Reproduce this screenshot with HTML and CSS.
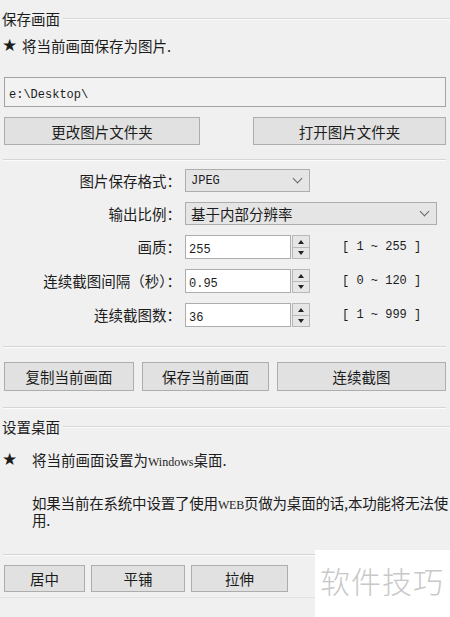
FILE: index.html
```html
<!DOCTYPE html>
<html lang="zh-CN">
<head>
  <meta charset="UTF-8">
  <title>保存画面</title>
  <link rel="stylesheet" href="styles.css">
</head>
<body>

  <div class="group-title first">保存画面</div>
  <div class="star-row"><span class="star">★</span><span class="star-text">将当前画面保存为图片.</span></div>

  <div class="path-box"><span class="asc">e:\Desktop\</span></div>

  <div class="btn-row two">
    <button class="btn wide">更改图片文件夹</button>
    <button class="btn wide">打开图片文件夹</button>
  </div>

  <div class="sep sep-a"></div>

  <div class="form">
    <label>图片保存格式：</label>
    <div class="select small"><span class="asc">JPEG</span><span class="chev"></span></div>

    <label>输出比例：</label>
    <div class="select large"><span>基于内部分辨率</span><span class="chev"></span></div>

    <label>画质：</label>
    <div class="spin-row">
      <div class="spin-input"><span class="asc">255</span></div>
      <div class="spin-btns"><span class="up"></span><span class="down"></span></div>
      <span class="range asc">[ 1 ~ 255 ]</span>
    </div>

    <label>连续截图间隔（秒）：</label>
    <div class="spin-row">
      <div class="spin-input"><span class="asc">0.95</span></div>
      <div class="spin-btns"><span class="up"></span><span class="down"></span></div>
      <span class="range asc">[ 0 ~ 120 ]</span>
    </div>

    <label>连续截图数：</label>
    <div class="spin-row">
      <div class="spin-input"><span class="asc">36</span></div>
      <div class="spin-btns"><span class="up"></span><span class="down"></span></div>
      <span class="range asc">[ 1 ~ 999 ]</span>
    </div>
  </div>

  <div class="sep sep-b"></div>

  <div class="btn-row three">
    <button class="btn b1">复制当前画面</button>
    <button class="btn b2">保存当前画面</button>
    <button class="btn b3">连续截图</button>
  </div>

  <div class="sep sep-c"></div>

  <div class="group-title second">设置桌面</div>
  <div class="star-row second"><span class="star">★</span><span class="star-text indent">将当前画面设置为<span class="latin">Windows</span>桌面.</span></div>

  <p class="note">如果当前在系统中设置了使用<span class="latin">WEB</span>页做为桌面的话,本功能将无法使用.</p>

  <div class="sep sep-d"></div>

  <div class="btn-row bottom">
    <button class="btn c1">居中</button>
    <button class="btn c2">平铺</button>
    <button class="btn c3">拉伸</button>
  </div>

  <div class="foot-line"></div>

  <div class="watermark">软件技巧</div>

</body>
</html>
```

FILE: styles.css
```css
body {
  margin: 0;
  width: 450px;
  height: 617px;
  overflow: hidden;
  position: relative;
  background: #f0f0f0;
  color: #1c1c1c;
  font-family: "Noto Sans CJK SC", sans-serif;
  font-size: 14.5px;
}

.asc {
  font-family: "Liberation Mono", monospace;
  font-size: 12px;
}

.latin {
  font-family: "Liberation Serif", serif;
  font-size: 12px;
  line-height: 1;
}

/* group box titles */
.group-title {
  display: flex;
  align-items: center;
  height: 22px;
  line-height: 22px;
  padding-left: 2px;
}

.group-title::after {
  content: "";
  flex: 1;
  border-top: 1px solid #d9d9d9;
  border-bottom: 1px solid #fbfbfb;
  margin-left: 3px;
}

.group-title.first {
  margin-top: 8px;
}

.group-title.second {
  margin-top: 7px;
}

.star-row {
  display: flex;
  align-items: center;
  height: 18px;
  margin-top: 6px;
  padding-left: 2px;
}

.star-row.second {
  margin-top: 12px;
}

.star {
  font-family: "DejaVu Sans", sans-serif;
  font-size: 17px;
  line-height: 18px;
  width: 20px;
}

.star-text.indent {
  margin-left: 10px;
}

.path-box {
  margin: 23px 4px 0;
  height: 28px;
  line-height: 28px;
  border: 1px solid #a3a3a3;
  padding-left: 4px;
  background: #f2f2f2;
}

/* buttons */
.btn {
  font-family: "Noto Sans CJK SC", sans-serif;
  font-size: 14.5px;
  color: #1c1c1c;
  background: #e1e1e1;
  border: 1px solid #adadad;
  padding: 0;
  margin: 0;
}

.btn-row {
  display: flex;
  padding: 0 4px;
}

.btn-row.two {
  margin-top: 10px;
  height: 28px;
  justify-content: space-between;
}

.btn.wide {
  width: 196px;
}

.btn-row.two .btn:last-child {
  width: 193px;
}

.btn-row.three {
  margin-top: 14px;
  height: 29px;
  gap: 8px;
}

.b1 { width: 130px; }
.b2 { width: 127px; }
.b3 { width: 169px; }

.btn-row.bottom {
  margin-top: 9px;
  height: 27px;
  gap: 6px;
}

.c1 { width: 81px; }
.c2 { width: 94px; }
.c3 { width: 97px; }

/* separators */
.sep {
  margin: 0 4px 0 3px;
  border-top: 1px solid #d5d5d5;
  border-bottom: 1px solid #fbfbfb;
}

.sep-a { margin-top: 14px; }
.sep-b { margin-top: 19px; }
.sep-c { margin-top: 16px; }
.sep-d { margin-top: 26px; }

.foot-line {
  margin-top: 5px;
  border-top: 1px solid #e2e2e2;
}

/* settings form */
.form {
  display: grid;
  grid-template-columns: 181px 1fr;
  grid-template-rows: 23px 23px 24px 24px 24px;
  column-gap: 4px;
  row-gap: 10px;
  margin-top: 8px;
}

.form label {
  text-align: right;
  line-height: 23px;
  white-space: nowrap;
}

.select {
  display: flex;
  align-items: center;
  justify-content: space-between;
  box-sizing: border-box;
  height: 23px;
  padding: 0 6px 0 5px;
  background: #e5e5e5;
  border: 1px solid #adadad;
}

.select.small { width: 125px; }
.select.large { width: 252px; }

.chev {
  width: 6px;
  height: 6px;
  border-right: 1.3px solid #666;
  border-bottom: 1.3px solid #666;
  transform: translateY(-2px) rotate(45deg);
  margin-right: 2px;
}

.spin-row {
  display: flex;
  align-items: center;
}

.spin-input {
  box-sizing: border-box;
  width: 106px;
  height: 24px;
  line-height: 22px;
  padding-left: 3px;
  background: #fff;
  border: 1px solid #adadad;
}

.spin-btns {
  display: flex;
  flex-direction: column;
  width: 18px;
  height: 24px;
  margin-left: 1px;
}

.spin-btns span {
  flex: 1;
  position: relative;
  background: #e6e6e6;
  border: 1px solid #b8b8b8;
}

.spin-btns .down {
  border-top: none;
}

.spin-btns span::after {
  content: "";
  position: absolute;
  left: 5px;
  top: 4px;
  border-left: 3.5px solid transparent;
  border-right: 3.5px solid transparent;
}

.spin-btns .up::after {
  border-bottom: 4px solid #222;
}

.spin-btns .down::after {
  top: 3px;
  border-top: 4px solid #222;
}

.range {
  margin-left: 32px;
  white-space: pre;
}

.note {
  margin: 26px 0 0 32px;
  line-height: 17px;
  letter-spacing: -0.2px;
}

.watermark {
  position: absolute;
  left: 315px;
  top: 550px;
  width: 135px;
  height: 67px;
  background: #fff;
  color: #c8c8c8;
  font-size: 30px;
  font-weight: 300;
  line-height: 60px;
  padding-left: 5px;
  box-sizing: border-box;
  letter-spacing: 1px;
}
```
